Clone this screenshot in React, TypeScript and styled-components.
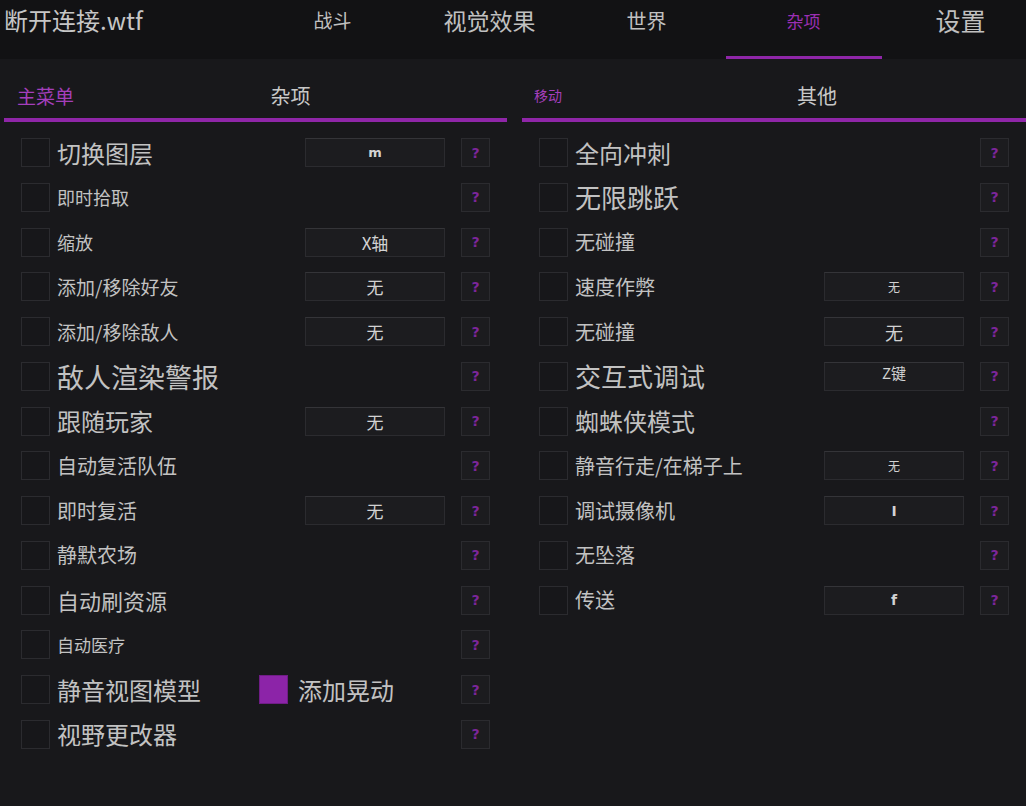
import React from "react";
import styled, { createGlobalStyle } from "styled-components";

const Global = createGlobalStyle`
  html, body { margin: 0; padding: 0; background: #18181b; }
  body { font-family: "Noto Sans CJK SC", "Noto Sans", "Liberation Sans", sans-serif; color: #c4c4c4; }
  * { box-sizing: border-box; }
`;

const Page = styled.div`
  width: 1026px;
  height: 806px;
  overflow: hidden;
  background: #18181b;
  display: flex;
  flex-direction: column;
`;

const TopBar = styled.header`
  height: 59px;
  background: #121214;
  display: flex;
  align-items: stretch;
  flex-shrink: 0;
`;

const Title = styled.div`
  width: 254px;
  flex-shrink: 0;
  padding: 3px 0 0 4px;
  font-size: 24px;
  line-height: 34px;
  color: #c6c6c6;
  white-space: nowrap;
`;

const Tab = styled.div<{ $size: number; $active?: boolean }>`
  width: 157px;
  flex-shrink: 0;
  position: relative;
  display: flex;
  justify-content: center;
  padding-top: ${(p) => 21 - p.$size * 0.72}px;
  font-size: ${(p) => p.$size}px;
  line-height: ${(p) => p.$size * 1.4}px;
  color: ${(p) => (p.$active ? "#9b2fb3" : "#c0c0c0")};
  &::after {
    content: "";
    display: ${(p) => (p.$active ? "block" : "none")};
    position: absolute;
    left: 1px;
    right: 0;
    bottom: 0;
    height: 3px;
    background: #8f26a8;
  }
`;

const Columns = styled.div`
  display: flex;
  gap: 15px;
  padding-left: 4px;
  flex: 1;
`;

const Panel = styled.section<{ $width: number }>`
  width: ${(p) => p.$width}px;
  flex-shrink: 0;
  display: flex;
  flex-direction: column;
`;

const PanelHead = styled.div`
  height: 63px;
  display: flex;
  align-items: center;
  padding-top: 13px;
  border-bottom: 4px solid #8f26a8;
`;

const HeadTab = styled.div<{ $size: number }>`
  padding-left: ${(p) => (p.$size < 16 ? 12 : 13)}px;
  font-size: ${(p) => p.$size}px;
  color: #a43fbb;
  white-space: nowrap;
`;

const HeadTitle = styled.div<{ $shift: number }>`
  flex: 1;
  text-align: center;
  padding-left: ${(p) => p.$shift}px;
  font-size: 20px;
  color: #c8c8c8;
`;

const List = styled.div`
  display: flex;
  flex-direction: column;
  gap: 15.75px;
  padding: 16px 17px 0 17px;
`;

const Row = styled.div`
  display: grid;
  grid-template-columns: 29px 1fr 140px 45px;
  align-items: center;
  height: 29px;
`;

const Check = styled.div<{ $on?: boolean }>`
  width: 29px;
  height: 29px;
  background: ${(p) => (p.$on ? "#8c24a8" : "#17171a")};
  border: 1px solid ${(p) => (p.$on ? "#6f1d86" : "#2b2b2f")};
`;

const LabelCell = styled.div`
  padding-left: 7px;
  display: flex;
  align-items: center;
  min-width: 0;
`;

const Label = styled.span<{ $size: number; $width?: number }>`
  font-size: ${(p) => p.$size}px;
  line-height: 1;
  color: #c2c2c2;
  white-space: nowrap;
  ${(p) => (p.$width ? `width: ${p.$width}px; flex-shrink: 0;` : "")}
`;

const Extra = styled.div`
  display: flex;
  align-items: center;
  gap: 10px;
`;

const KeyBox = styled.div<{ $size: number; $bold?: boolean; $lift?: number }>`
  height: 29px;
  background: #1c1c1f;
  border: 1px solid #2b2b2f;
  border-top-color: #343438;
  display: flex;
  align-items: center;
  justify-content: center;
  padding-bottom: ${(p) => p.$lift ?? 0}px;
  font-size: ${(p) => p.$size}px;
  font-weight: ${(p) => (p.$bold ? 700 : 400)};
  font-family: ${(p) => (p.$bold ? '"DejaVu Sans", "Noto Sans CJK SC", sans-serif' : '"Noto Sans CJK SC", "Noto Sans", sans-serif')};
  color: #d2d2d2;
`;

const Help = styled.div`
  justify-self: end;
  width: 29px;
  height: 29px;
  background: #1c1c1f;
  border: 1px solid #2b2b2f;
  display: flex;
  align-items: center;
  justify-content: center;
  font-family: "DejaVu Sans", sans-serif;
  font-size: 14px;
  font-weight: 700;
  color: #7c269a;
`;

type Item = {
  label: string;
  size: number;
  key?: string;
  keySize?: number;
  bold?: boolean;
  lift?: number;
  extra?: string;
};

const leftItems: Item[] = [
  { label: "切换图层", size: 24, key: "m", keySize: 13, bold: true },
  { label: "即时拾取", size: 18 },
  { label: "缩放", size: 18, key: "X轴", keySize: 17 },
  { label: "添加/移除好友", size: 19, key: "无", keySize: 17 },
  { label: "添加/移除敌人", size: 19, key: "无", keySize: 17 },
  { label: "敌人渲染警报", size: 27 },
  { label: "跟随玩家", size: 24, key: "无", keySize: 17 },
  { label: "自动复活队伍", size: 20 },
  { label: "即时复活", size: 20, key: "无", keySize: 17 },
  { label: "静默农场", size: 20 },
  { label: "自动刷资源", size: 22 },
  { label: "自动医疗", size: 17 },
  { label: "静音视图模型", size: 24, extra: "添加晃动" },
  { label: "视野更改器", size: 24 },
];

const rightItems: Item[] = [
  { label: "全向冲刺", size: 24 },
  { label: "无限跳跃", size: 26 },
  { label: "无碰撞", size: 20 },
  { label: "速度作弊", size: 20, key: "无", keySize: 12 },
  { label: "无碰撞", size: 20, key: "无", keySize: 18 },
  { label: "交互式调试", size: 26, key: "Z键", keySize: 15, lift: 8 },
  { label: "蜘蛛侠模式", size: 24 },
  { label: "静音行走/在梯子上", size: 20, key: "无", keySize: 12 },
  { label: "调试摄像机", size: 20, key: "I", keySize: 14, bold: true },
  { label: "无坠落", size: 20 },
  { label: "传送", size: 20, key: "f", keySize: 14, bold: true },
];

const OptionRow: React.FC<{ item: Item }> = ({ item }) => (
  <Row>
    <Check />
    <LabelCell>
      <Label $size={item.size} $width={item.extra ? 202 : undefined}>
        {item.label}
      </Label>
      {item.extra && (
        <Extra>
          <Check $on />
          <Label $size={24}>{item.extra}</Label>
        </Extra>
      )}
    </LabelCell>
    {item.key ? (
      <KeyBox $size={item.keySize ?? 17} $bold={item.bold} $lift={item.lift}>
        {item.key}
      </KeyBox>
    ) : (
      <span />
    )}
    <Help>?</Help>
  </Row>
);

const tabs = [
  { name: "战斗", size: 19 },
  { name: "视觉效果", size: 23 },
  { name: "世界", size: 20 },
  { name: "杂项", size: 17, active: true },
  { name: "设置", size: 25 },
];

export default function App() {
  return (
    <Page>
      <Global />
      <TopBar>
        <Title>断开连接.wtf</Title>
        {tabs.map((t) => (
          <Tab key={t.name} $size={t.size} $active={t.active}>
            {t.name}
          </Tab>
        ))}
      </TopBar>
      <Columns>
        <Panel $width={503}>
          <PanelHead>
            <HeadTab $size={19}>主菜单</HeadTab>
            <HeadTitle $shift={0}>杂项</HeadTitle>
          </PanelHead>
          <List>
            {leftItems.map((it, i) => (
              <OptionRow key={i} item={it} />
            ))}
          </List>
        </Panel>
        <Panel $width={504}>
          <PanelHead>
            <HeadTab $size={14}>移动</HeadTab>
            <HeadTitle $shift={46}>其他</HeadTitle>
          </PanelHead>
          <List>
            {rightItems.map((it, i) => (
              <OptionRow key={i} item={it} />
            ))}
          </List>
        </Panel>
      </Columns>
    </Page>
  );
}
